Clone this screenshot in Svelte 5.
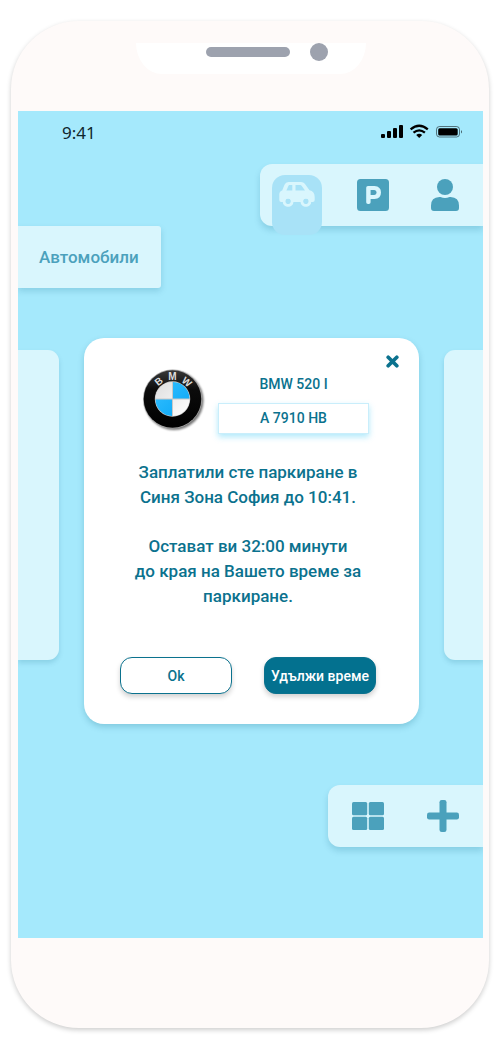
<script>
  const car = { model: 'BMW 520 I', plate: 'A 7910 HB' };
  let open = $state(true);
</script>

<main class="phone" lang="bg">
  <div class="bezel">
    <div class="notch">
      <span class="speaker"></span>
      <span class="camera"></span>
    </div>
  </div>

  <div class="screen">
    <header class="status">
      <span>9:41</span>
      <svg width="82" height="16" viewBox="0 0 82 16" aria-hidden="true">
        <rect x="0" y="10" width="4" height="4" rx="1" />
        <rect x="6" y="7" width="4" height="7" rx="1" />
        <rect x="12" y="4" width="4" height="10" rx="1" />
        <rect x="18" y="1" width="4" height="13" rx="1" />
        <g fill="none" stroke="#000" stroke-width="2.3">
          <path d="M29.600 5.300Q38.200 -1.800 46.800 5.300" />
          <path d="M32.500 8.700Q38.200 4 43.900 8.700" />
        </g>
        <path d="M35.200 11Q38.200 8.600 41.200 11L38.200 14Z" />
        <rect x="55.500" y="2.500" width="23" height="10.500" rx="3" fill="none" stroke="#000" stroke-opacity=".5" />
        <rect x="57.200" y="4.200" width="19.500" height="7.200" rx="1.500" />
        <path d="M80 6Q82 7.800 80 9.600Z" fill-opacity=".6" />
      </svg>
    </header>

    <nav class="bar top" aria-label="Меню">
      <button class="active" aria-label="Автомобили">
        <svg width="36" height="26" viewBox="0 0 36 26" aria-hidden="true">
          <path fill-rule="evenodd" d="M9.500 0H22Q24.500 0 25.800 1.800L30.500 8.300Q35.700 9.500 35.700 15V18Q35.700 20 33.700 20H32A5.200 5.200 0 0 1 21.800 20H14.200A5.200 5.200 0 0 1 4 20H2.200Q.3 20 .3 18V12.500Q.3 9.500 3.200 8.600L5.500 2.800Q6.600 0 9.500 0ZM9.600 3.400L7.400 8.500H13.300V3H10.200ZM16.500 3V8.500H26L22.600 3.800L21.500 3ZM9.100 16.400A2.800 2.800 0 1 0 9.100 22A2.800 2.800 0 1 0 9.100 16.400ZM26.900 16.400A2.800 2.800 0 1 0 26.900 22A2.800 2.800 0 1 0 26.900 16.400Z" />
          <path fill-rule="evenodd" d="M9.100 14A5.400 5.400 0 1 0 9.100 24.800A5.400 5.400 0 1 0 9.100 14ZM9.100 16.400A2.800 2.800 0 1 1 9.100 22A2.800 2.800 0 1 1 9.100 16.400ZM26.900 14A5.400 5.400 0 1 0 26.900 24.800A5.400 5.400 0 1 0 26.900 14ZM26.900 16.400A2.800 2.800 0 1 1 26.900 22A2.800 2.800 0 1 1 26.900 16.400Z" />
        </svg>
      </button>
      <button aria-label="Паркиране">
        <svg width="32" height="32" viewBox="0 0 32 32" aria-hidden="true">
          <path fill-rule="evenodd" d="M3.500 0H28.500Q32 0 32 3.500V28.500Q32 32 28.500 32H3.500Q0 32 0 28.500V3.500Q0 0 3.500 0ZM11 7Q9.200 7 9.200 8.800V23.200Q9.200 25 11 25H11.800Q13.600 25 13.600 23.200V20H17.500Q24 19.500 24 13.500T17.500 7ZM13.600 11H17.300Q19.600 11.300 19.600 13.500T17.300 16H13.600Z" />
        </svg>
      </button>
      <button aria-label="Профил">
        <svg width="28" height="32" viewBox="0 0 28 32" aria-hidden="true">
          <circle cx="14" cy="8" r="8" />
          <path d="M8.400 18H9.500Q14 20 18.500 18H19.600Q28 18.500 28 26.400V29Q28 32 25 32H3Q0 32 0 29V26.400Q0 18.500 8.400 18Z" />
        </svg>
      </button>
    </nav>

    <h1 class="heading">Автомобили</h1>

    <div class="carousel">
      <div class="side left"></div>
      <section class="dialog" class:closed={!open} role="dialog" aria-label="Паркиране">
        <button class="close" aria-label="Затвори" onclick={() => (open = false)}>
          <svg width="13" height="13" viewBox="0 0 13 13" aria-hidden="true">
            <path d="M2.200 2.200L10.800 10.800M10.800 2.200L2.200 10.800" stroke="currentColor" stroke-width="3.700" stroke-linecap="round" />
          </svg>
        </button>

        <div class="car">
          <svg class="logo" width="64" height="66" viewBox="0 0 64 66" role="img" aria-label="BMW">
            <defs>
              <linearGradient id="ring" x1="0" y1="0" x2="0" y2="1">
                <stop offset="0" stop-color="#383838" />
                <stop offset=".35" stop-color="#0b0b0b" />
                <stop offset="1" stop-color="#000" />
              </linearGradient>
              <linearGradient id="blue" x1="0" y1="0" x2="1" y2="1">
                <stop offset="0" stop-color="#35c0ff" />
                <stop offset="1" stop-color="#08a6f6" />
              </linearGradient>
              <linearGradient id="silver" x1="0" y1="0" x2="1" y2="1">
                <stop offset="0" stop-color="#dedede" />
                <stop offset="1" stop-color="#fff" />
              </linearGradient>
              <filter id="soft" x="-20%" y="-20%" width="140%" height="140%">
                <feGaussianBlur stdDeviation="1.200" />
              </filter>
            </defs>
            <circle cx="32" cy="32.500" r="29.500" fill="#000" opacity=".55" filter="url(#soft)" />
            <circle cx="30.500" cy="31" r="29.500" fill="#aaa" />
            <circle cx="30.500" cy="31" r="28.800" fill="url(#ring)" />
            <circle cx="30.500" cy="31" r="17.700" fill="#c8c8c8" />
            <path d="M30 30.500V14A17 17 0 0 0 13.500 30.500ZM31 31.500H47.500A17 17 0 0 1 31 48Z" fill="url(#silver)" />
            <path d="M31 30.500V14A17 17 0 0 1 47.500 30.500ZM30 31.500H13.500A17 17 0 0 0 30 48Z" fill="url(#blue)" />
            <g class="mark">
              <text x="30.500" y="12">M</text>
              <text x="30.500" y="12" transform="rotate(-38 30.500 31)">B</text>
              <text x="30.500" y="12" transform="rotate(40 30.500 31)">W</text>
            </g>
          </svg>
          <div class="details">
            <h2>{car.model}</h2>
            <span class="plate">{car.plate}</span>
          </div>
        </div>

        <div class="message">
          <p>Заплатили сте паркиране в<br />Синя Зона София до 10:41.</p>
          <p>Остават ви 32:00 минути<br />до края на Вашето време за<br />паркиране.</p>
        </div>

        <div class="actions">
          <button onclick={() => (open = false)}>Ok</button>
          <button class="primary">Удължи време</button>
        </div>
      </section>
      <div class="side right"></div>
    </div>

    <nav class="bar bottom" aria-label="Действия">
      <button aria-label="Изглед">
        <svg width="32" height="28" viewBox="0 0 32 28" aria-hidden="true">
          <rect width="15.200" height="13.200" rx="1.500" />
          <rect x="16.800" width="15.200" height="13.200" rx="1.500" />
          <rect y="14.800" width="15.200" height="13.200" rx="1.500" />
          <rect x="16.800" y="14.800" width="15.200" height="13.200" rx="1.500" />
        </svg>
      </button>
      <button aria-label="Добави">
        <svg width="32" height="32" viewBox="0 0 32 32" aria-hidden="true">
          <rect x="12.500" width="7" height="32" rx="2.200" />
          <rect y="12.500" width="32" height="7" rx="2.200" />
        </svg>
      </button>
    </nav>
  </div>
</main>

<style>
  :global(body) {
    background: #fff;
  }

  .phone {
    box-sizing: border-box;
    margin: 21px 11px;
    padding: 0 6px 90px 7px;
    border-radius: 68px;
    background: #fefaf9;
    box-shadow: 0 2px 5px rgba(0, 0, 0, 0.2);
    font-family: Roboto, "Noto Sans", sans-serif;
    font-weight: 500;
    color: #0b728e;
  }

  button {
    padding: 0;
    border: 0;
    background: none;
    color: inherit;
    font: inherit;
    cursor: pointer;
  }

  svg {
    display: block;
    flex: none;
  }

  .bezel {
    box-sizing: border-box;
    height: 90px;
    padding-top: 22px;
  }

  .notch {
    box-sizing: border-box;
    display: flex;
    justify-content: flex-end;
    align-items: flex-start;
    gap: 20px;
    width: 230px;
    height: 31px;
    margin: 0 auto;
    padding-right: 38px;
    border-radius: 0 0 26px 26px / 0 0 31px 31px;
    background: #fff;
  }

  .speaker {
    width: 84px;
    height: 10px;
    margin-top: 4px;
    border-radius: 5px;
    background: #9da2ae;
  }

  .camera {
    width: 18px;
    height: 18px;
    border-radius: 50%;
    background: #9da2ae;
  }

  .screen {
    display: flex;
    flex-direction: column;
    padding-bottom: 91px;
    overflow: hidden;
    background: #a5e9fc;
  }

  .status {
    display: flex;
    justify-content: space-between;
    align-items: center;
    height: 42px;
    margin-bottom: 11px;
    padding: 0 20px 0 44px;
    font-family: "Noto Sans", sans-serif;
    font-size: 17px;
    font-weight: 400;
    color: #10262c;
  }

  .bar {
    box-sizing: border-box;
    display: flex;
    align-self: flex-end;
    align-items: center;
    height: 62px;
    border-radius: 12px 0 0 12px;
    background: #d9f6fd;
    box-shadow: 0 4px 6px rgba(0, 90, 120, 0.18);
    color: #4ba1bc;
    fill: currentColor;
  }

  .top {
    padding: 0 24px 0 12px;
    gap: 35px;
  }

  .bottom {
    margin-top: 61px;
    padding: 0 24px;
    gap: 43px;
  }

  .top .active {
    align-self: flex-start;
    display: flex;
    justify-content: center;
    width: 50px;
    height: 60px;
    margin-top: 11px;
    padding-top: 7px;
    box-sizing: border-box;
    border-radius: 13px;
    background: #a8e2f7;
    color: #d9f6fd;
  }

  .top button:last-child {
    margin-left: 7px;
  }

  .heading {
    box-sizing: border-box;
    align-self: flex-start;
    width: 143px;
    margin: 0;
    padding-left: 21px;
    border-radius: 0 3px 3px 0;
    background: #d9f6fd;
    box-shadow: 0 3px 6px rgba(0, 90, 120, 0.18);
    color: #4ba1bc;
    font-size: 17px;
    font-weight: 500;
    line-height: 62px;
  }

  .carousel {
    display: flex;
    align-items: flex-start;
    gap: 25px;
    margin-top: 50px;
  }

  .side {
    width: 41px;
    height: 310px;
    margin-top: 12px;
    background: #d9f6fd;
    box-shadow: 0 3px 5px rgba(0, 90, 120, 0.16);
  }

  .left {
    border-radius: 0 11px 11px 0;
  }

  .right {
    width: 39px;
    border-radius: 11px 0 0 11px;
  }

  .dialog {
    position: relative;
    box-sizing: border-box;
    flex: 1;
    min-width: 0;
    padding: 30px 43px 30px 36px;
    border-radius: 20px;
    background: #fff;
    box-shadow: 0 3px 6px rgba(0, 90, 120, 0.22);
  }

  .closed {
    visibility: hidden;
  }

  .close {
    position: absolute;
    top: 17px;
    right: 20px;
  }

  .car {
    display: flex;
    gap: 12px;
    padding: 0 7px 0 22px;
  }

  .details {
    flex: 1;
    text-align: center;
    font-size: 14px;
  }

  h2 {
    margin: 0 0 3px;
    font-size: 14px;
    font-weight: 500;
    line-height: 32px;
  }

  .plate {
    display: block;
    border: 1px solid #c9eefb;
    line-height: 29px;
    box-shadow: 0 3px 6px rgba(60, 200, 245, 0.4);
  }

  .mark {
    fill: #ddd;
    font-family: "Liberation Sans", sans-serif;
    font-size: 10px;
    font-weight: 700;
    text-anchor: middle;
  }

  .message {
    margin-top: 26px;
    text-align: center;
    font-size: 17px;
    line-height: 25px;
    white-space: nowrap;
  }

  .message p {
    display: flow-root;
    margin: 0 -10px 24px;
  }

  .actions {
    display: flex;
    gap: 32px;
    margin-top: 48px;
  }

  .actions button {
    flex: 1;
    height: 37px;
    border: 1px solid #0b728e;
    border-radius: 12px;
    background: #fff;
    box-shadow: 0 3px 5px rgba(0, 0, 0, 0.18);
    font-size: 14px;
    white-space: nowrap;
  }

  .actions .primary {
    background: #03718f;
    color: #fff;
  }
</style>
